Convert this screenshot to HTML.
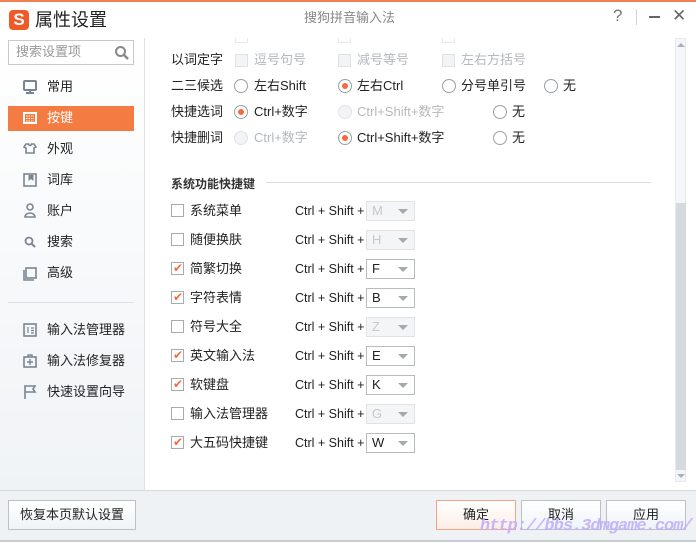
<!DOCTYPE html>
<html><head><meta charset="utf-8"><style>
*{box-sizing:border-box;margin:0;padding:0}
body{width:696px;height:542px;position:relative;overflow:hidden;background:#fff;font-family:"Liberation Sans","Noto Sans CJK SC",sans-serif;font-size:12px;color:#222}
.a{position:absolute;white-space:nowrap}
.side{left:0;top:38px;width:145px;height:452px;background:linear-gradient(#fff,#f0f3f6);border-right:1px solid #dde2e8}
.nav{left:47px;height:20px;line-height:20px;font-size:13px;color:#222}
.ic{position:absolute;left:22px}
.cb{width:13px;height:13px;border:1px solid #a6abb0;background:#fff}
.cb.d{border-color:#dfe2e5;background:#f2f4f6}
.cb.c::after{content:"✔";position:absolute;left:1px;top:-3px;color:#f26a3d;font-size:12px;line-height:16px}
.rd{width:14px;height:14px;border:1px solid #9aa0a6;border-radius:50%;background:#fff}
.rd.d{border-color:#dfe2e5;background:#f2f4f6}
.rd.c::after{content:"";position:absolute;left:3px;top:3px;width:6px;height:6px;border-radius:50%;background:#f26a3d}
.lbl{font-size:13px;line-height:16px;height:16px}
.k{font-size:12.5px;line-height:16px;height:16px}
.g{color:#b5b9bd}
.sel{width:49px;height:20px;border:1px solid #b8bcc0;background:#fff;font-size:13px;line-height:18px;padding-left:5px}
.sel.d{border-color:#dfe3e6;background:#f3f5f7;color:#c5c9cc}
.sel::after{content:"";position:absolute;right:6px;top:7px;border:5px solid transparent;border-top:5px solid #a4a9ae;border-bottom:0}
.btn{height:30px;border:1px solid #bcc1c6;background:linear-gradient(#fff,#eef4f9);text-align:center;line-height:28px;font-size:13px}
</style></head><body>
<div class="a" style="left:0;top:0;width:696px;height:2px;background:#f08050"></div>
<div class="a" style="left:9px;top:10px;width:20px;height:20px;background:#f05a28;border-radius:4px;color:#fff;font-weight:bold;font-size:17px;line-height:20px;text-align:center">S</div>
<div class="a" style="left:35px;top:8px;font-size:18px;line-height:24px;color:#222">属性设置</div>
<div class="a" style="left:304px;top:9px;font-size:13px;line-height:18px;color:#888">搜狗拼音输入法</div>
<div class="a" style="left:613px;top:6px;font-size:17px;color:#777">?</div>
<div class="a" style="left:636px;top:9px;width:1px;height:16px;background:#d0d4d8"></div>
<div class="a" style="left:649px;top:16px;width:11px;height:2px;background:#666"></div>
<div class="a" style="left:672px;top:6px;font-size:17px;color:#666">✕</div>
<div class="a side"></div>
<div class="a" style="left:8px;top:40px;width:126px;height:25px;border:1px solid #c6cacf;background:#fff"></div>
<div class="a" style="left:16px;top:44px;font-size:13px;line-height:16px;color:#999">搜索设置项</div>
<svg class="a" style="left:114px;top:45px" width="16" height="16"><circle cx="6.5" cy="6.5" r="4.5" fill="none" stroke="#888" stroke-width="2"/><line x1="10" y1="10" x2="14" y2="14" stroke="#888" stroke-width="2.5"/></svg>
<div class="a" style="left:8px;top:106px;width:126px;height:25px;background:#f47c42"></div>
<svg class="a" style="left:0;top:0" width="145" height="420" fill="none" stroke="#7b8591" stroke-width="2">
<rect x="24" y="81" width="12" height="9" rx="1"/><line x1="30" y1="90" x2="30" y2="93"/><line x1="26" y1="93" x2="34" y2="93"/>
<rect x="24" y="113" width="12" height="10" stroke="#fff"/><path d="M26 116h8M26 118.5h8M26 121h8" stroke="#fff" stroke-width="1" stroke-dasharray="1.5 1"/>
<path d="M26 144l-2 3 2 1v5h8v-5l2-1-2-3h-2.5a1.5 1.5 0 01-3 0z" stroke-width="1.6"/>
<rect x="24" y="174" width="12" height="12" stroke-width="1.6"/><path d="M29 175v5l2-1.5 2 1.5v-5" fill="#7b8591" stroke-width="1"/>
<circle cx="30" cy="207" r="3" stroke-width="1.6"/><path d="M25 217a5 4 0 0110 0z" stroke-width="1.6"/>
<circle cx="29" cy="241" r="3.5" stroke-width="1.8"/><line x1="32" y1="244" x2="35" y2="247" stroke-width="2"/>
<rect x="26" y="268" width="10" height="10" stroke-width="1.6"/><path d="M24 270v10h10" stroke-width="1.6"/>
<rect x="24" y="324" width="12" height="12" stroke-width="1.6"/><path d="M28 327v6M31 328h3M31 330.5h3M31 333h3" stroke-width="1.2"/>
<rect x="24" y="357" width="12" height="10" stroke-width="1.6"/><path d="M28 357v-2h4v2M30 359v6M27 362h6" stroke-width="1.4"/>
<path d="M25 399v-13h10l-2 3 2 3h-10" stroke-width="1.6"/>
</svg>
<div class="a nav" style="top:77px">常用</div>
<div class="a nav" style="top:108px;color:#fff">按键</div>
<div class="a nav" style="top:139px">外观</div>
<div class="a nav" style="top:170px">词库</div>
<div class="a nav" style="top:201px">账户</div>
<div class="a nav" style="top:232px">搜索</div>
<div class="a nav" style="top:263px">高级</div>
<div class="a" style="left:8px;top:302px;width:126px;height:1px;background:#dde1e5"></div>
<div class="a nav" style="top:320px">输入法管理器</div>
<div class="a nav" style="top:351px">输入法修复器</div>
<div class="a nav" style="top:382px">快速设置向导</div>
<div class="a" style="left:235px;top:38px;width:13px;height:5px;border:1px solid #e6e8ea;border-top:0"></div>
<div class="a" style="left:338px;top:38px;width:13px;height:5px;border:1px solid #e6e8ea;border-top:0"></div>
<div class="a" style="left:442px;top:38px;width:13px;height:5px;border:1px solid #e6e8ea;border-top:0"></div>
<div class="a lbl" style="left:171px;top:52px">以词定字</div>
<div class="a cb d" style="left:235px;top:54px"></div><div class="a lbl g" style="left:254px;top:52px">逗号句号</div>
<div class="a cb d" style="left:338px;top:54px"></div><div class="a lbl g" style="left:357px;top:52px">减号等号</div>
<div class="a cb d" style="left:442px;top:54px"></div><div class="a lbl g" style="left:461px;top:52px">左右方括号</div>
<div class="a lbl" style="left:171px;top:78px">二三候选</div>
<div class="a rd" style="left:234px;top:79px"></div><div class="a lbl" style="left:254px;top:78px">左右Shift</div>
<div class="a rd c" style="left:338px;top:79px"></div><div class="a lbl" style="left:357px;top:78px">左右Ctrl</div>
<div class="a rd" style="left:442px;top:79px"></div><div class="a lbl" style="left:461px;top:78px">分号单引号</div>
<div class="a rd" style="left:544px;top:79px"></div><div class="a lbl" style="left:563px;top:78px">无</div>
<div class="a lbl" style="left:171px;top:104px">快捷选词</div>
<div class="a rd c" style="left:234px;top:105px"></div><div class="a lbl" style="left:254px;top:104px">Ctrl+数字</div>
<div class="a rd d" style="left:338px;top:105px"></div><div class="a lbl g" style="left:357px;top:104px">Ctrl+Shift+数字</div>
<div class="a rd" style="left:493px;top:105px"></div><div class="a lbl" style="left:512px;top:104px">无</div>
<div class="a lbl" style="left:171px;top:130px">快捷删词</div>
<div class="a rd d" style="left:234px;top:131px"></div><div class="a lbl g" style="left:254px;top:130px">Ctrl+数字</div>
<div class="a rd c" style="left:338px;top:131px"></div><div class="a lbl" style="left:357px;top:130px">Ctrl+Shift+数字</div>
<div class="a rd" style="left:493px;top:131px"></div><div class="a lbl" style="left:512px;top:130px">无</div>
<div class="a" style="left:171px;top:176px;font-size:12px;line-height:16px;font-weight:bold;color:#333">系统功能快捷键</div>
<div class="a" style="left:266px;top:182px;width:385px;height:1px;background:#d8dde2"></div>
<div class="a cb" style="left:171px;top:204px"></div><div class="a lbl" style="left:190px;top:203px">系统菜单</div><div class="a k" style="left:295px;top:203px">Ctrl + Shift +</div><div class="a sel d" style="left:366px;top:201px">M</div>
<div class="a cb" style="left:171px;top:233px"></div><div class="a lbl" style="left:190px;top:232px">随便换肤</div><div class="a k" style="left:295px;top:232px">Ctrl + Shift +</div><div class="a sel d" style="left:366px;top:230px">H</div>
<div class="a cb c" style="left:171px;top:262px"></div><div class="a lbl" style="left:190px;top:261px">简繁切换</div><div class="a k" style="left:295px;top:261px">Ctrl + Shift +</div><div class="a sel" style="left:366px;top:259px">F</div>
<div class="a cb c" style="left:171px;top:291px"></div><div class="a lbl" style="left:190px;top:290px">字符表情</div><div class="a k" style="left:295px;top:290px">Ctrl + Shift +</div><div class="a sel" style="left:366px;top:288px">B</div>
<div class="a cb" style="left:171px;top:320px"></div><div class="a lbl" style="left:190px;top:319px">符号大全</div><div class="a k" style="left:295px;top:319px">Ctrl + Shift +</div><div class="a sel d" style="left:366px;top:317px">Z</div>
<div class="a cb c" style="left:171px;top:349px"></div><div class="a lbl" style="left:190px;top:348px">英文输入法</div><div class="a k" style="left:295px;top:348px">Ctrl + Shift +</div><div class="a sel" style="left:366px;top:346px">E</div>
<div class="a cb c" style="left:171px;top:378px"></div><div class="a lbl" style="left:190px;top:377px">软键盘</div><div class="a k" style="left:295px;top:377px">Ctrl + Shift +</div><div class="a sel" style="left:366px;top:375px">K</div>
<div class="a cb" style="left:171px;top:407px"></div><div class="a lbl" style="left:190px;top:406px">输入法管理器</div><div class="a k" style="left:295px;top:406px">Ctrl + Shift +</div><div class="a sel d" style="left:366px;top:404px">G</div>
<div class="a cb c" style="left:171px;top:436px"></div><div class="a lbl" style="left:190px;top:435px">大五码快捷键</div><div class="a k" style="left:295px;top:435px">Ctrl + Shift +</div><div class="a sel" style="left:366px;top:433px">W</div>
<div class="a" style="left:675px;top:38px;width:11px;height:444px;background:#f4f6f9;border:1px solid #e6e9ed"></div>
<div class="a" style="left:676px;top:203px;width:10px;height:267px;background:#d4dadd"></div>
<div class="a" style="left:677px;top:43px;border:4px solid transparent;border-bottom:4px solid #a8b2bc;border-top:0"></div>
<div class="a" style="left:677px;top:474px;border:4px solid transparent;border-top:4px solid #a8b2bc;border-bottom:0"></div>
<div class="a" style="left:0;top:490px;width:696px;height:52px;background:#eef2f5;border-top:1px solid #d5dade"></div>
<div class="a" style="left:0;top:540px;width:696px;height:2px;background:#c8cdd2"></div>
<div class="a btn" style="left:8px;top:500px;width:128px">恢复本页默认设置</div>
<div class="a btn" style="left:436px;top:500px;width:80px;border-color:#f4a584;background:linear-gradient(#fff,#fdeee6)">确定</div>
<div class="a btn" style="left:521px;top:500px;width:80px">取消</div>
<div class="a btn" style="left:606px;top:500px;width:80px">应用</div>
<div class="a" style="left:480px;top:517px;font-size:17px;font-weight:bold;font-style:italic;color:rgba(190,170,250,0.85);font-family:'Liberation Mono',monospace;letter-spacing:-1px">http://bbs.3dmgame.com/</div>
</body></html>
